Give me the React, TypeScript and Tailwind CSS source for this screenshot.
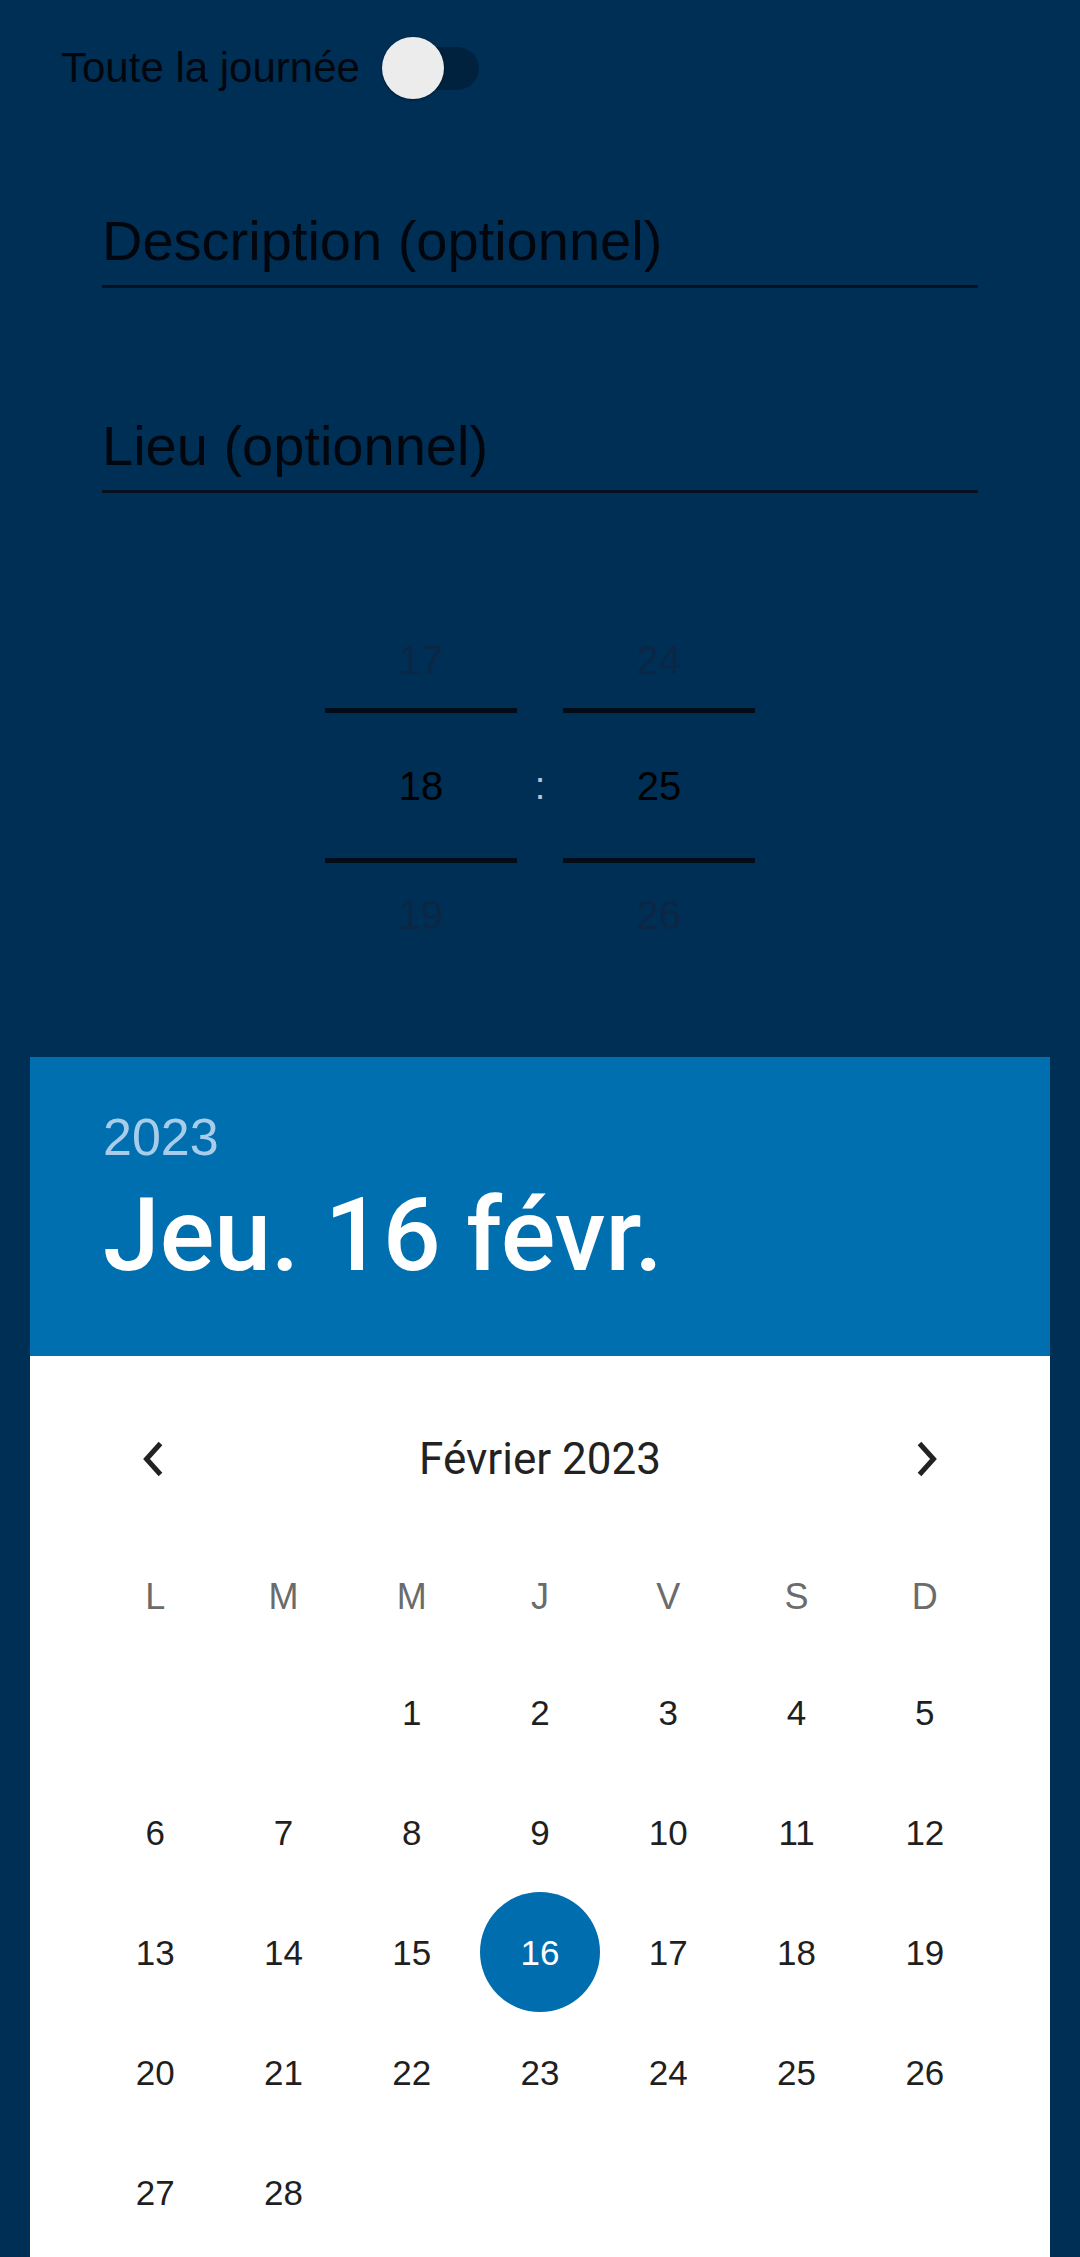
import React from "react";

const weeks: (number | null)[][] = [
  [null, null, 1, 2, 3, 4, 5],
  [6, 7, 8, 9, 10, 11, 12],
  [13, 14, 15, 16, 17, 18, 19],
  [20, 21, 22, 23, 24, 25, 26],
  [27, 28, null, null, null, null, null],
];

const weekdays = ["L", "M", "M", "J", "V", "S", "D"];

function Chevron({ dir }: { dir: "left" | "right" }) {
  return (
    <svg width="22" height="36" viewBox="0 0 22 36" className="block">
      <path
        d={dir === "left" ? "M18.5 2.5 L4.5 18 L18.5 33.5" : "M3.5 2.5 L17.5 18 L3.5 33.5"}
        fill="none"
        stroke="#222222"
        strokeWidth="5"
        strokeLinejoin="miter"
      />
    </svg>
  );
}

function Field({ label, top }: { label: string; top: string }) {
  return (
    <div className={`mx-[102px] ${top} border-b-[3px] border-[#04111f] pb-[16px]`}>
      <div className="text-[56px] leading-none text-[#03070d]">{label}</div>
    </div>
  );
}

function TimeColumn({ prev, cur, next }: { prev: string; cur: string; next: string }) {
  return (
    <div className="flex w-[192px] flex-col">
      <div className="flex h-[96px] items-center justify-center text-[40px] leading-none text-[#0b2745]">{prev}</div>
      <div className="h-[5px] bg-[#020c17]" />
      <div className="flex h-[145px] items-center justify-center text-[40px] leading-none text-[#000000]">{cur}</div>
      <div className="h-[5px] bg-[#020c17]" />
      <div className="flex h-[104px] items-center justify-center text-[40px] leading-none text-[#0b2745]">{next}</div>
    </div>
  );
}

export default function App() {
  return (
    <div className="h-[2257px] w-[1080px] overflow-hidden bg-[#002f56] font-['Liberation_Sans',Arial,sans-serif]">
      {/* Toggle row */}
      <div className="mt-[37px] flex h-[62px] items-center gap-[22px] pl-[61px]">
        <span className="text-[42px] leading-none text-[#03070d]">Toute la journée</span>
        <div className="relative h-[62px] w-[97px]">
          <div className="absolute right-0 top-[10px] h-[43px] w-[86px] rounded-full bg-[#00223f]" />
          <div className="absolute left-0 top-0 h-[62px] w-[62px] rounded-full bg-[#ececec] shadow-[0_1px_3px_rgba(0,0,0,0.4)]" />
        </div>
      </div>

      <Field label="Description (optionnel)" top="mt-[114px]" />
      <Field label="Lieu (optionnel)" top="mt-[130px]" />

      {/* Time picker */}
      <div className="mt-[119px] flex justify-center">
        <TimeColumn prev="17" cur="18" next="19" />
        <div className="flex w-[46px] flex-col">
          <div className="h-[101px]" />
          <div className="flex h-[145px] items-center justify-center text-[38px] leading-none text-[#b4c6d8]">:</div>
        </div>
        <TimeColumn prev="24" cur="25" next="26" />
      </div>

      {/* Date picker card */}
      <div className="mx-[30px] mt-[90px]">
        <div className="h-[299px] bg-[#006faf] pl-[73px] pt-[54px]">
          <div className="text-[52px] leading-none text-[#a8cdea]">2023</div>
          <div className="mt-[21px] font-['Roboto',sans-serif] text-[102px] font-medium leading-none text-white">
            Jeu. 16 févr.
          </div>
        </div>
        <div className="min-h-[1000px] bg-white pt-[63px]">
          <div className="flex h-[80px] items-center justify-between px-[112px]">
            <Chevron dir="left" />
            <span className="font-['Roboto',sans-serif] text-[44px] font-normal leading-none text-[#222222]">
              Février 2023
            </span>
            <Chevron dir="right" />
          </div>
          <div className="px-[61px] pt-[58px]">
            <div className="grid h-[80px] grid-cols-7 items-center">
              {weekdays.map((d, i) => (
                <div key={i} className="text-center text-[36px] leading-none text-[#6b6b6b]">
                  {d}
                </div>
              ))}
            </div>
            <div className="mt-[15px] flex flex-col">
              {weeks.map((w, wi) => (
                <div key={wi} className="grid h-[120px] grid-cols-7">
                  {w.map((d, di) => (
                    <div key={di} className="flex items-center justify-center">
                      {d === 16 ? (
                        <div className="flex h-[120px] w-[120px] items-center justify-center rounded-full bg-[#006dae] text-[35px] leading-none text-white">
                          {d}
                        </div>
                      ) : (
                        <span className="text-[35px] leading-none text-[#1f1f1f]">{d ?? ""}</span>
                      )}
                    </div>
                  ))}
                </div>
              ))}
            </div>
          </div>
        </div>
      </div>
    </div>
  );
}
